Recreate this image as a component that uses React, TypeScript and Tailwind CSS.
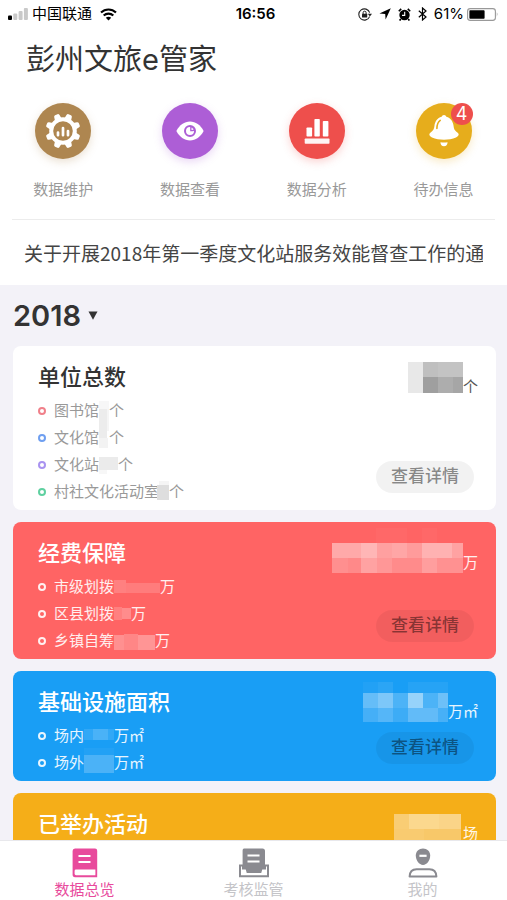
import { useState } from 'react';
import type { ReactNode } from 'react';

type Cell = [x: number, y: number, w: number, h: number, fill: string, opacity?: number];

interface MosaicProps {
  width: number;
  height: number;
  cells: Cell[];
}

// Pixelated block that hides a figure
function Mosaic({ width, height, cells }: MosaicProps) {
  return (
    <svg width={width} height={height} viewBox={`0 0 ${width} ${height}`} className="shrink-0 overflow-visible" shapeRendering="crispEdges" aria-hidden="true">
      {cells.map(([x, y, w, h, fill, opacity = 1], i) => (
        <rect key={i} x={x} y={y} width={w} height={h} fill={fill} fillOpacity={opacity} />
      ))}
    </svg>
  );
}

interface CardRow {
  label: string;
  unit: string;
  ring: string;
  width: number;
  cells: Cell[];
}

interface SummaryCard {
  id: string;
  title: string;
  unit: string;
  card: string;
  titleColor: string;
  rowColor: string;
  unitColor: string;
  total: { width: number; cells: Cell[] };
  rows: CardRow[];
}

const CARDS: SummaryCard[] = [
  {
    id: 'units',
    title: '单位总数',
    unit: '个',
    card: 'bg-white',
    titleColor: 'text-[#333333]',
    rowColor: 'text-[#999999]',
    unitColor: 'text-[#555555]',
    total: {
      width: 55,
      cells: [
        [0, -5, 15, 31, '#e8e8e8'],
        [15, -5, 15, 15, '#bfbfbf'],
        [30, -5, 25, 15, '#c3c3c3'],
        [15, 10, 15, 16, '#9f9f9f'],
        [30, 10, 15, 16, '#adadad'],
        [45, 10, 10, 16, '#a6a6a6'],
      ],
    },
    rows: [
      { label: '图书馆', unit: '个', ring: 'border-[#f0808a]', width: 10, cells: [[0, -3, 10, 8, '#f7f7f7'], [0, 5, 8, 22, '#ececec'], [8, 5, 2, 22, '#f5f5f5']] },
      { label: '文化馆', unit: '个', ring: 'border-[#6f9ff0]', width: 10, cells: [[0, 0, 8, 7, '#ececec'], [0, 7, 9, 10, '#f3f3f3']] },
      { label: '文化站', unit: '个', ring: 'border-[#a993f0]', width: 19, cells: [[0, -1, 19, 13, '#ebebeb'], [0, 12, 8, 4, '#f7f7f7']] },
      { label: '村社文化活动室', unit: '个', ring: 'border-[#5fd0a0]', width: 10, cells: [[-2, 0, 12, 15, '#dedede'], [0, -4, 10, 4, '#f5f5f5']] },
    ],
  },
  {
    id: 'funds',
    title: '经费保障',
    unit: '万',
    card: 'bg-[#ff6464]',
    titleColor: 'text-white',
    rowColor: 'text-white/90',
    unitColor: 'text-white/90',
    total: {
      width: 131,
      cells: [
        [0, 0, 29, 15, '#ffa9a9'],
        [29, 0, 16, 15, '#ffb6b6'],
        [45, 0, 15, 15, '#ffa0a0'],
        [60, 0, 15, 15, '#ffa6a6'],
        [75, 0, 15, 15, '#ff9b9b'],
        [90, 0, 30, 15, '#ffb2b2'],
        [120, 0, 11, 15, '#ffa2a2'],
        [0, 15, 16, 15, '#ff8f8f'],
        [16, 15, 13, 15, '#ff8989'],
        [29, 15, 16, 15, '#ffa2a2'],
        [45, 15, 15, 15, '#ff9797'],
        [60, 15, 30, 15, '#ff8b8b'],
        [90, 15, 15, 15, '#ff9e9e'],
        [105, 15, 26, 15, '#ff9191'],
        [44, -15, 31, 15, '#ffffff', 0.03],
        [90, -15, 15, 15, '#ffffff', 0.03],
      ],
    },
    rows: [
      { label: '市级划拨', unit: '万', ring: 'border-white/90', width: 46, cells: [[0, 0, 12, 13, '#ff8080'], [12, 3, 34, 10, '#ff7c7c']] },
      { label: '区县划拨', unit: '万', ring: 'border-white/90', width: 17, cells: [[0, 0, 8, 13, '#ff8080'], [8, 1, 9, 11, '#ff8c8c']] },
      { label: '乡镇自筹', unit: '万', ring: 'border-white/90', width: 41, cells: [[0, 1, 10, 15, '#ff9090'], [10, 0, 14, 16, '#ff8686'], [24, 1, 17, 15, '#ff9595']] },
    ],
  },
  {
    id: 'area',
    title: '基础设施面积',
    unit: '万㎡',
    card: 'bg-[#199ef5]',
    titleColor: 'text-white',
    rowColor: 'text-white/90',
    unitColor: 'text-white/90',
    total: {
      width: 85,
      cells: [
        [0, -10, 15, 11, '#ffffff', 0.04],
        [15, -10, 15, 11, '#ffffff', 0.08],
        [45, -10, 40, 11, '#ffffff', 0.06],
        [0, 1, 15, 15, '#65bdf8'],
        [15, 1, 15, 15, '#7dc7f9'],
        [30, 1, 15, 15, '#4cb3f7'],
        [45, 1, 15, 15, '#97d3fa'],
        [60, 1, 15, 15, '#4cb3f7'],
        [75, 1, 10, 15, '#6dc0f8'],
        [0, 16, 15, 14, '#45aff7'],
        [15, 16, 15, 14, '#55b6f8'],
        [30, 16, 15, 14, '#3dacf6'],
        [45, 16, 30, 14, '#62bbf8'],
        [75, 16, 10, 14, '#47b0f7'],
      ],
    },
    rows: [
      { label: '场内', unit: '万㎡', ring: 'border-white/90', width: 30, cells: [[0, 0, 9, 11, '#32a8f6'], [9, 0, 15, 11, '#4ab2f7'], [24, 0, 6, 11, '#32a8f6']] },
      { label: '场外', unit: '万㎡', ring: 'border-white/90', width: 30, cells: [[0, -1, 30, 18, '#4bb2f7'], [0, -8, 30, 7, '#ffffff', 0.04]] },
    ],
  },
  {
    id: 'events',
    title: '已举办活动',
    unit: '场',
    card: 'bg-[#f5ae18]',
    titleColor: 'text-white',
    rowColor: 'text-white/90',
    unitColor: 'text-white/90',
    total: {
      width: 69,
      cells: [
        [0, 0, 15, 15, '#f9cd74'],
        [15, 0, 30, 15, '#fbd88e'],
        [45, 0, 22, 15, '#fad488'],
        [0, 15, 30, 15, '#f9cb70'],
        [30, 15, 37, 15, '#f8c869'],
      ],
    },
    rows: [],
  },
];

function GearChartIcon() {
  return (
    <svg width="36" height="36" viewBox="-18 -18 36 36" aria-hidden="true">
      <g fill="#fff">
        {[22.5, 67.5, 112.5, 157.5, 202.5, 247.5, 292.5, 337.5].map((angle) => (
          <path key={angle} d="M-3.8-11L-2.8-16.3Q-2.5-17.6-1.3-17.6H1.3Q2.5-17.6 2.8-16.3L3.8-11Z" transform={`rotate(${angle})`} />
        ))}
      </g>
      <circle r="11.8" fill="none" stroke="#fff" strokeWidth="4" />
      <g stroke="#fff" strokeWidth="2.7" strokeLinecap="round">
        <path d="M-5 1.6V4.2M0-3V4.2M5 0V4.2" />
      </g>
    </svg>
  );
}

function EyeIcon() {
  return (
    <svg width="28" height="20" viewBox="-14 -10 28 20" aria-hidden="true">
      <path d="M-13.6 0C-10.5-6-5.6-9.4 0-9.4S10.5-6 13.6 0C10.5 6 5.6 9.4 0 9.4S-10.5 6-13.6 0Z" fill="#fff" />
      <circle r="5" fill="#fff" stroke="#ad5ed6" strokeWidth="2" />
      <path d="M.2-4.4A4.4 4.4 0 0 1 4.4-.2L2.6.3H.2Z" fill="#ad5ed6" />
      <path d="M1.5-3.6A4 4 0 0 1 3.6-1.2L1.5-1Z" fill="#fff" />
    </svg>
  );
}

function BarsIcon() {
  return (
    <svg width="26" height="26" viewBox="0 0 26 26" fill="#fff" aria-hidden="true">
      <rect x="2.5" y="9.5" width="5.6" height="9" rx=".8" />
      <rect x="10.4" y="1" width="5.4" height="17.5" rx=".8" />
      <rect x="18.8" y="3" width="5.6" height="15.5" rx=".8" />
      <rect x=".7" y="20.4" width="24.8" height="5.4" rx=".8" opacity=".94" />
    </svg>
  );
}

function BellIcon() {
  return (
    <svg width="30" height="34" viewBox="0 0 30 34" aria-hidden="true">
      <path d="M15 1C16.3 1 17 1.9 17.4 2.8C21.6 4 24 7.6 24.5 11.6C25 15.4 25.6 16.6 28.4 18.4C30.6 20.2 29.8 22.2 27 23.4C20 26.4 10 26.4 3 23.4C.2 22.2-.6 20.2 1.6 18.4C4.4 16.6 5 15.4 5.5 11.6C6 7.6 8.4 4 12.6 2.8C13 1.9 13.7 1 15 1Z" fill="#fff" />
      <path d="M11.2 6.4C9 8 8 10.5 7.9 14.4" fill="none" stroke="#e6ad1c" strokeWidth="1.6" strokeLinecap="round" />
      <path d="M11.4 28.2C13.8 28.7 16.2 28.7 18.6 28.2C18.4 31 17.2 32.3 15 32.3S11.6 31 11.4 28.2Z" fill="#fff" />
    </svg>
  );
}

function BookIcon() {
  return (
    <svg width="26" height="30" viewBox="0 0 26 30" aria-hidden="true">
      <path d="M3 .5H23Q25.2.5 25.2 2.7V29.3H3Q.6 29.3.6 26.6V3Q.6.5 3 .5Z" fill="currentColor" />
      <path d="M6.5 8H18.5M6.5 14H18.5" stroke="#fff" strokeWidth="2" />
      <path d="M4 21.6H23.4V27.2H4Q2.6 27.2 2.6 25.8V23Q2.6 21.6 4 21.6Z" fill="#fff" />
    </svg>
  );
}

function TrayIcon() {
  return (
    <svg width="32" height="30" viewBox="0 0 32 30" aria-hidden="true">
      <path d="M2 17.5H5V20.5H8.5L9.5 24H22.5L23.5 20.5H27V17.5H30V28.3H2Z" fill="#fff" stroke="currentColor" strokeWidth="2" />
      <path d="M6 .5H24.5Q27 .5 27 3V20.5H24L22 24.4H10L8 20.5H4.6V2.5Q4.6.5 6 .5Z" fill="currentColor" />
      <path d="M9.5 7.6H21.5M9.5 13.6H21.5" stroke="#fff" strokeWidth="2" />
    </svg>
  );
}

function PersonIcon() {
  return (
    <svg width="30" height="30" viewBox="0 0 30 30" aria-hidden="true">
      <path d="M15 .5C19.2.5 22.2 3.4 22.2 7.6C22.2 12.2 19 17 15 17S7.8 12.2 7.8 7.6C7.8 3.4 10.8.5 15 .5Z" fill="currentColor" />
      <path d="M11.4 7.8H18.6" stroke="#fff" strokeWidth="2.2" />
      <path d="M1.6 28.5C1.8 23.4 4 21.2 8.6 21.2H21.4C26 21.2 28.2 23.4 28.4 28.5Z" fill="none" stroke="currentColor" strokeWidth="2" strokeLinejoin="round" />
    </svg>
  );
}

function StatusBar() {
  return (
    <div className="grid h-7 grid-cols-[1fr_auto_1fr] items-center px-2 text-black">
      <div className="flex items-center gap-1">
        <svg width="20" height="12" viewBox="0 0 20 12" aria-hidden="true">
          <rect x="0" y="7.5" width="4" height="4.5" rx="1" />
          <rect x="5.3" y="5.5" width="4" height="6.5" rx="1" fill="#c9c9c9" />
          <rect x="10.6" y="3" width="4" height="9" rx="1" fill="#c9c9c9" />
          <rect x="15.9" y="0" width="4" height="12" rx="1" fill="#c9c9c9" />
        </svg>
        <span className="text-[15px]">中国联通</span>
        <svg className="ml-1" width="17" height="13" viewBox="0 0 17 13" fill="none" stroke="#000" strokeWidth="2.1" aria-hidden="true">
          <path d="M1 4.6C5.2.4 11.8.4 16 4.6" />
          <path d="M3.7 7.6C6.4 5 10.6 5 13.3 7.6" />
          <path d="M8.5 12.6L5.8 9.8C7.3 8.4 9.7 8.4 11.2 9.8Z" fill="#000" stroke="none" />
        </svg>
      </div>
      <span className="pl-1 text-[15px] font-semibold">16:56</span>
      <div className="flex items-center justify-end gap-[7px]">
        <svg width="14" height="13" viewBox="0 0 14 13" aria-hidden="true">
          <path d="M11.6 8.6A5.6 5.6 0 1 1 11.7 4.6" fill="none" stroke="#222" strokeWidth="1.1" />
          <path d="M9.8 5.8H14L11.9 8.4Z" fill="#222" />
          <rect x="4" y="5.8" width="5.2" height="3.8" rx=".5" fill="#222" />
          <path d="M5.1 6V4.7A1.5 1.5 0 0 1 8.1 4.7V6" fill="none" stroke="#222" />
        </svg>
        <svg width="12" height="12" viewBox="0 0 12 12" aria-hidden="true">
          <path d="M11.8.3L6.6 11.6L6.2 5.9L.4 5.4Z" />
        </svg>
        <svg width="13" height="13" viewBox="0 0 13 13" aria-hidden="true">
          <circle cx="6.5" cy="7" r="5.2" />
          <path d="M.8 3.3L3.2.9M12.2 3.3L9.8.9M2.8 11L1.6 12.6M10.2 11L11.4 12.6" stroke="#000" strokeWidth="1.6" />
          <path d="M6.7 3.8V7.4H4" fill="none" stroke="#fff" strokeWidth="1.1" />
        </svg>
        <svg width="9" height="14" viewBox="0 0 9 14" fill="none" stroke="#000" strokeWidth="1.2" aria-hidden="true">
          <path d="M.8 3.8L8 10L4.5 13V1L8 4L.8 10.2" />
        </svg>
        <span className="text-[15px]">61%</span>
        <svg className="-ml-1" width="32" height="13" viewBox="0 0 32 13" aria-hidden="true">
          <rect x=".6" y=".6" width="27.8" height="11.8" rx="2.6" fill="none" stroke="#999" strokeWidth="1.1" />
          <rect x="2.4" y="2.2" width="15.2" height="8.6" rx=".8" />
          <path d="M29.8 4.3Q31.6 6.5 29.8 8.7Z" fill="#999" />
        </svg>
      </div>
    </div>
  );
}

interface ShortcutProps {
  label: string;
  circle: string;
  badge?: number;
  children: ReactNode;
}

function Shortcut({ label, circle, badge, children }: ShortcutProps) {
  return (
    <button type="button" className="flex flex-col items-center gap-[21px]">
      <span className={`relative flex size-14 items-center justify-center rounded-full ${circle}`}>
        {children}
        {badge !== undefined && (
          <span className="absolute -right-px top-0 flex size-[22px] items-center justify-center rounded-full bg-[#ee4f4c] text-lg leading-none text-white">
            {badge}
          </span>
        )}
      </span>
      <span className="text-[15px] leading-5 text-[#999999]">{label}</span>
    </button>
  );
}

function Card({ data }: { data: SummaryCard }) {
  return (
    <section className={`flex justify-between rounded-lg pl-[25px] pr-[18px] ${data.card}`}>
      <div className="pb-[5px] pt-4">
        <h2 className={`text-[22px] font-medium leading-[30px] ${data.titleColor}`}>{data.title}</h2>
        {data.rows.length > 0 && (
          <ul className={`mt-[5px] text-[15px] leading-[27px] ${data.rowColor}`}>
            {data.rows.map((row) => (
              <li key={row.label} className="flex items-center">
                <span className={`mr-2 size-2 rounded-full border-2 ${row.ring}`} />
                <span>{row.label}</span>
                <Mosaic width={row.width} height={14} cells={row.cells} />
                <span>{row.unit}</span>
              </li>
            ))}
          </ul>
        )}
      </div>
      <div className="flex flex-col items-end justify-between pb-[17px] pt-[21px]">
        <div className="flex items-end">
          <Mosaic width={data.total.width} height={30} cells={data.total.cells} />
          <span className={`text-[15px] leading-5 ${data.unitColor}`}>{data.unit}</span>
        </div>
        <button type="button" className="mr-1 h-8 rounded-full bg-black/5 px-[15px] text-[17px] font-medium text-black/45">
          查看详情
        </button>
      </div>
    </section>
  );
}

const TABS = [
  { id: 'overview', label: '数据总览', icon: <BookIcon /> },
  { id: 'review', label: '考核监管', icon: <TrayIcon /> },
  { id: 'mine', label: '我的', icon: <PersonIcon /> },
];

export default function App() {
  const [year, setYear] = useState('2018');
  const [tab, setTab] = useState('overview');

  return (
    <div className="flex h-screen flex-col bg-[#f3f2f8] font-['Inter','Noto_Sans_CJK_SC',sans-serif]">
      <main className="min-h-0 flex-1 overflow-y-auto [scrollbar-width:none]">
        {/* Header */}
        <header className="bg-white">
          <StatusBar />
          <h1 className="px-[26px] pt-3 text-[29px] leading-10 text-[#333333]">彭州文旅e管家</h1>

          <nav className="mt-[23px] grid grid-cols-4">
            <Shortcut label="数据维护" circle="bg-[#ae8650] shadow-[0_3px_8px_#ae865040]">
              <GearChartIcon />
            </Shortcut>
            <Shortcut label="数据查看" circle="bg-[#ad5ed6] shadow-[0_3px_8px_#ad5ed640]">
              <EyeIcon />
            </Shortcut>
            <Shortcut label="数据分析" circle="bg-[#ee4f4c] shadow-[0_3px_8px_#ee4f4c40]">
              <BarsIcon />
            </Shortcut>
            <Shortcut label="待办信息" circle="bg-[#e6ad1c] shadow-[0_3px_8px_#e6ad1c40]" badge={4}>
              <BellIcon />
            </Shortcut>
          </nav>

          <div className="mx-3 mt-[19px] border-t border-[#ececec]" />
          <div className="px-6">
            <a href="#notice" className="block overflow-hidden whitespace-nowrap pb-[18px] pt-[19px] font-['Noto_Sans_CJK_SC',sans-serif] text-[19px] leading-7 text-[#444444]">
              关于开展2018年第一季度文化站服务效能督查工作的通知
            </a>
          </div>
        </header>

        {/* Year picker */}
        <div className="flex h-[61px] items-center px-[13px]">
          <label className="relative flex items-center">
            <span className="sr-only">年份</span>
            <select
              value={year}
              onChange={(e) => setYear(e.target.value)}
              className="field-sizing-content appearance-none bg-transparent pr-[17px] text-[29px] font-semibold leading-10 text-[#333333] outline-none"
            >
              <option value="2018">2018</option>
              <option value="2017">2017</option>
            </select>
            <svg className="pointer-events-none absolute right-0" width="10" height="9" viewBox="0 0 10 9" fill="#333" aria-hidden="true">
              <path d="M.5.5H9.5L5 8.8Z" />
            </svg>
          </label>
        </div>

        <div className="flex flex-col gap-3 pb-3 pl-[13px] pr-[11px]">
          {CARDS.map((card) => (
            <Card key={card.id} data={card} />
          ))}
        </div>
      </main>

      {/* Bottom tabs */}
      <nav className="grid shrink-0 grid-cols-3 border-t border-[#e8e8ec] bg-white pt-[7px]">
        {TABS.map(({ id, label, icon }) => (
          <button
            key={id}
            type="button"
            onClick={() => setTab(id)}
            className={`flex flex-col items-center gap-0.5 ${tab === id ? 'text-[#e84a9c]' : 'text-[#8a8a90]'}`}
          >
            {icon}
            <span className={`text-[15px] leading-5 ${tab === id ? '' : 'text-[#c4c4c8]'}`}>{label}</span>
          </button>
        ))}
      </nav>
    </div>
  );
}
